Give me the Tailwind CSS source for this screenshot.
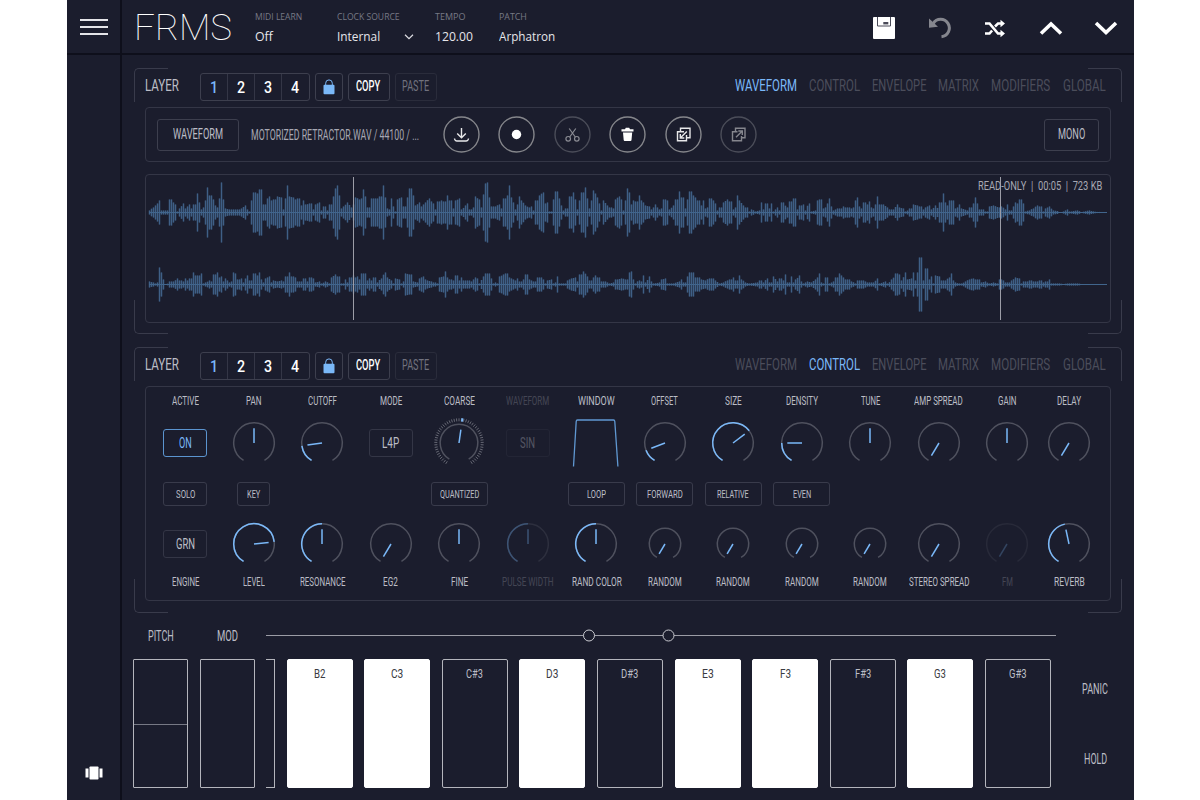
<!DOCTYPE html>
<html lang="en">
<head>
    <meta charset="UTF-8">
    <title>FRMS</title>
    <script src="https://cdn.jsdelivr.net/npm/@tailwindcss/browser@4"></script>
</head>
<body class="bg-white h-[800px] overflow-hidden pl-[67px]">
    <div class="flex flex-col w-[1067px] h-[800px] bg-[#1b1d2d] text-[#bcbdc6] font-['Roboto',sans-serif] overflow-hidden">

        <!-- top bar -->
        <header class="flex h-[55px] shrink-0 border-b-2 border-[#0e0f1b]">
            <div class="w-[55px] shrink-0 border-r-2 border-[#0e0f1b] flex flex-col items-center gap-[5px] pt-[19px]">
                <div class="w-[28px] h-[2px] bg-[#e4e4e8]"></div>
                <div class="w-[28px] h-[2px] bg-[#e4e4e8]"></div>
                <div class="w-[28px] h-[2px] bg-[#e4e4e8]"></div>
            </div>
            <div class="pl-[12px] pt-[6px] w-[132.5px] text-[37px] leading-[43px] font-thin text-white"><span data-w="98">FRMS</span></div>
            <div class="flex font-['Open_Sans',sans-serif] text-[12px] leading-[16px] text-[#e6e6ea] pt-[10px]">
                <div class="w-[82.5px] flex flex-col gap-[6px]">
                    <div class="text-[9px] leading-[13px] text-[#777985]"><span data-w="47.5">MIDI LEARN</span></div>
                    <div><span data-w="17.5">Off</span></div>
                </div>
                <div class="w-[98px] flex flex-col gap-[6px]">
                    <div class="text-[9px] leading-[13px] text-[#777985]"><span data-w="63">CLOCK SOURCE</span></div>
                    <div class="flex items-center">
                        <div class="w-[67px]"><span data-w="43.5">Internal</span></div>
                        <svg width="10" height="6" viewBox="0 0 10 6" fill="none" stroke="#dddde2" stroke-width="1.2"><path d="M1 .8 5 4.6 9 .8"/></svg>
                    </div>
                </div>
                <div class="w-[64px] flex flex-col gap-[6px]">
                    <div class="text-[9px] leading-[13px] text-[#777985]"><span data-w="30">TEMPO</span></div>
                    <div><span data-w="37.5">120.00</span></div>
                </div>
                <div class="flex flex-col gap-[6px]">
                    <div class="text-[9px] leading-[13px] text-[#777985]"><span data-w="27.5">PATCH</span></div>
                    <div><span data-w="56.5">Arphatron</span></div>
                </div>
            </div>
            <div class="ml-auto mr-[16px] pt-[2px] flex items-center gap-[31.5px]">
                <!-- save -->
                <svg width="24" height="24" viewBox="0 0 24 24"><rect x="1" y="1" width="22" height="22" rx="1" fill="#fff"/><path d="M5.5 1v9h13V1" fill="none" stroke="#4a4b58" stroke-width="1"/><rect x="11.3" y="6" width="5" height="2.4" fill="#4a4b58"/></svg>
                <!-- undo -->
                <svg width="24" height="24" viewBox="0 0 24 24" fill="none"><path d="M5.2 7.5A8.7 8.7 0 1 1 13.5 20.7" stroke="#85868e" stroke-width="3"/><path d="M1 2.5v9.2l9-1z" fill="#85868e"/></svg>
                <!-- shuffle -->
                <svg width="24" height="24" viewBox="0 0 24 24" fill="none" stroke="#fff" stroke-width="2.6"><path d="M2 7.5h4.5l8.5 10h3.5M2 17.5h4.5l2.6-3M12 10.5l3-3h3.5"/><path d="M17.5 3.8 22 7.5l-4.5 3.7zM17.5 13.8 22 17.5l-4.5 3.7z" fill="#fff" stroke="none"/></svg>
                <svg width="24" height="24" viewBox="0 0 24 24" fill="none" stroke="#fff" stroke-width="3.6"><path d="M2 17.5 12 8l10 9.5"/></svg>
                <svg width="24" height="24" viewBox="0 0 24 24" fill="none" stroke="#fff" stroke-width="3.6"><path d="M2 7 12 16.5 22 7"/></svg>
            </div>
        </header>

        <div class="flex grow">
            <!-- side rail -->
            <nav class="w-[55px] shrink-0 border-r-2 border-[#0e0f1b] flex flex-col justify-end items-center pb-[21px]">
                <svg width="18" height="14" viewBox="0 0 18 14" fill="#fff"><rect x=".5" y="2.5" width="3" height="9"/><rect x="4.5" y=".5" width="9" height="13" rx=".8"/><rect x="14.5" y="2.5" width="3" height="9"/></svg>
            </nav>

            <main class="pl-[12px] pt-[13px] flex flex-col">
                <!-- waveform layer -->
                <section class="relative w-[988px] h-[266px] mb-[13px] px-[11px]">
                    <div class="absolute left-0 top-0 w-[34px] h-[34px] border-t border-l border-[#393b4b] rounded-tl-[5px]"></div>
                    <div class="absolute right-0 top-0 w-[34px] h-[34px] border-t border-r border-[#393b4b] rounded-tr-[5px]"></div>
                    <div class="absolute left-0 bottom-0 w-[34px] h-[34px] border-b border-l border-[#393b4b] rounded-bl-[5px]"></div>
                    <div class="absolute right-0 bottom-0 w-[34px] h-[34px] border-b border-r border-[#393b4b] rounded-br-[5px]"></div>
                    <div data-header="WAVEFORM" class="flex h-[39px] pt-[5px]"></div>
                    <div class="flex items-center h-[55px] w-[966px] border border-[#343646] rounded-[4px] px-[11px] mb-[12px]">
                        <div class="w-[82px] h-[32px] shrink-0 border border-[#3d3f4e] rounded-[3px] flex items-center justify-center text-[15px] leading-none"><span data-w="50">WAVEFORM</span></div>
                        <div class="pl-[12px] w-[204px] text-[14px] leading-[18px] text-[#a7a8b3]"><span data-w="168">MOTORIZED RETRACTOR.WAV / 44100 / ...</span></div>
                        <div class="flex gap-[18.4px]">
                            <svg width="37" height="37" viewBox="0 0 37 37" fill="none" stroke="#e8e8ea" stroke-width="1.4"><circle cx="18.5" cy="18.5" r="17.5" stroke="#85868b"/><path d="M18.5 12v9.5M14.2 17.5l4.3 4.3 4.3-4.3M11.5 22.5q.3 2.5 2.5 2.5h9q2.2 0 2.5-2.5"/></svg>
                            <svg width="37" height="37" viewBox="0 0 37 37" fill="none"><circle cx="18.5" cy="18.5" r="17.5" stroke="#85868b" stroke-width="1.4"/><circle cx="18.5" cy="18.5" r="4.7" fill="#fff"/></svg>
                            <svg width="37" height="37" viewBox="0 0 37 37" fill="none" stroke="#8a8b93" stroke-width="1.2"><circle cx="18.5" cy="18.5" r="17.5" stroke="#4b4d59" stroke-width="1.4"/><path d="M15.2 12.5 21.3 21M21.8 12.5 15.7 21"/><circle cx="14.2" cy="22.8" r="2.3"/><circle cx="22.8" cy="22.8" r="2.3"/></svg>
                            <svg width="37" height="37" viewBox="0 0 37 37" fill="#fff"><circle cx="18.5" cy="18.5" r="17.5" fill="none" stroke="#85868b" stroke-width="1.4"/><path d="M12.5 13.2h3.5l.8-1.5h3.4l.8 1.5h3.5v2.3h-12zM14 16.5h9.2l-.7 7.5q-.1 1-1 1h-5.8q-.9 0-1-1z"/></svg>
                            <svg width="37" height="37" viewBox="0 0 37 37" fill="none" stroke="#e8e8ea" stroke-width="1.4"><circle cx="18.5" cy="18.5" r="17.5" stroke="#85868b"/><path d="M15.5 15V12.3h9.5v9.5h-3M19 15.7h-6.5v9h9V19"/><path d="M21.8 15.5 15.5 21.8M15.3 18v4h4"/></svg>
                            <svg width="37" height="37" viewBox="0 0 37 37" fill="none" stroke="#85868e" stroke-width="1.4"><circle cx="18.5" cy="18.5" r="17.5" stroke="#4b4d59"/><path d="M15.5 15V12.3h9.5v9.5h-3M17.5 15.7h-5v9h9V20"/><path d="M16 21.3 22 15.3M18.3 15h4v4"/></svg>
                        </div>
                        <div class="ml-auto w-[55px] h-[32px] border border-[#3d3f4e] rounded-[3px] flex items-center justify-center text-[15px] leading-none"><span data-w="27">MONO</span></div>
                    </div>
                    <div class="relative h-[149px] w-[966px] border border-[#343646] rounded-[4px]">
                        <svg id="wave" width="964" height="147" viewBox="146 175 964 147"></svg>
                        <div class="absolute right-[8px] top-[3px] text-[13px] leading-[16px] text-[#a7a8b3] whitespace-pre"><span data-w="124">READ-ONLY  |  00:05  |  723 KB</span></div>
                    </div>
                </section>

                <!-- control layer -->
                <section class="relative w-[988px] h-[266px] px-[11px]">
                    <div class="absolute left-0 top-0 w-[34px] h-[34px] border-t border-l border-[#393b4b] rounded-tl-[5px]"></div>
                    <div class="absolute right-0 top-0 w-[34px] h-[34px] border-t border-r border-[#393b4b] rounded-tr-[5px]"></div>
                    <div class="absolute left-0 bottom-0 w-[34px] h-[34px] border-b border-l border-[#393b4b] rounded-bl-[5px]"></div>
                    <div class="absolute right-0 bottom-0 w-[34px] h-[34px] border-b border-r border-[#393b4b] rounded-br-[5px]"></div>
                    <div data-header="CONTROL" class="flex h-[39px] pt-[5px]"></div>
                    <div id="controls" class="flex h-[215px] w-[966px] border border-[#343646] rounded-[4px] pl-[5px] pt-px"></div>
                </section>

                <!-- keyboard -->
                <section class="flex h-[188px] pt-[12px] -ml-px">
                    <div class="w-[55px] mr-[12px]">
                        <div class="h-[34px] pt-[2px] flex justify-center text-[14px] leading-[18px]"><span data-w="26">PITCH</span></div>
                        <div class="h-[129px] border border-[#b4b5bc] pt-[64px] rounded-[1px]"><div class="h-px bg-[#777985]"></div></div>
                    </div>
                    <div class="w-[55px] mr-[11px]">
                        <div class="h-[34px] pt-[2px] flex justify-center text-[14px] leading-[18px]"><span data-w="21">MOD</span></div>
                        <div class="h-[129px] border border-[#b4b5bc] rounded-[1px]"></div>
                    </div>
                    <div class="w-[790px]">
                        <svg class="block" width="790" height="34" viewBox="266 625 790 34" fill="#1b1d2d" stroke="#9b9ca5"><path d="M266 635.5H1056"/><circle cx="589" cy="635.5" r="5.5" stroke="#c9cad0"/><circle cx="668.5" cy="635.5" r="5.5" stroke="#c9cad0"/></svg>
                        <div id="keys" class="flex gap-[11.6px]">
                            <div class="w-[9px] h-[129px] border-y border-r border-[#b4b5bc]"></div>
                        </div>
                    </div>
                    <div class="w-[78px] pt-[54px] text-[14px] leading-[20px] flex flex-col items-center gap-[50px]">
                        <div><span data-w="26">PANIC</span></div>
                        <div><span data-w="23">HOLD</span></div>
                    </div>
                </section>
            </main>
        </div>
    </div>

    <script>
        const BLUE = '#7ab8f8';

        // layer headers
        const tabs = [['WAVEFORM', 62], ['CONTROL', 51], ['ENVELOPE', 54.5], ['MATRIX', 41], ['MODIFIERS', 59.5], ['GLOBAL', 43]];
        document.querySelectorAll('[data-header]').forEach(el => {
            el.innerHTML = `
                <div class="w-[54.5px] pt-[2px] text-[17px] leading-[20px]"><span data-w="34">LAYER</span></div>
                <div class="flex h-[28px] w-[110px] border border-[#3d3f4e] rounded-[3px] text-[16px] leading-none font-medium text-white divide-x divide-[#343646]">
                    ${[1, 2, 3, 4].map(n => `<div class="flex-1 flex items-center justify-center pt-px"><span data-w="8" ${n == 1 ? `style="color:${BLUE}"` : ''}>${n}</span></div>`).join('')}
                </div>
                <div class="ml-[5px] w-[28px] h-[28px] border border-[#3d3f4e] rounded-[3px] flex items-center justify-center">
                    <svg width="12" height="16" viewBox="0 0 12 16"><path d="M2.7 7V4.2a3.3 3.3 0 0 1 6.6 0V7" fill="none" stroke="${BLUE}" stroke-width="1"/><rect x=".5" y="5.8" width="11" height="9.5" rx="1" fill="${BLUE}"/></svg>
                </div>
                <div class="ml-[5px] w-[42px] h-[28px] border border-[#3d3f4e] rounded-[3px] flex items-center justify-center pt-px text-[14.5px] leading-none font-medium text-white"><span data-w="24.5">COPY</span></div>
                <div class="ml-[5px] w-[42px] h-[28px] border border-[#2a2c3b] rounded-[3px] flex items-center justify-center pt-px text-[14.5px] leading-none text-[#71727e]"><span data-w="27">PASTE</span></div>
                <div class="ml-auto mr-[5.5px] pt-[2px] flex gap-[12px] text-[17px] leading-[20px] text-[#4b4d5b]">
                    ${tabs.map(([t, w]) => `<div class="${t == el.dataset.header ? 'text-[#7ab8f8]' : ''}"><span data-w="${w}">${t}</span></div>`).join('')}
                </div>`;
        });

        // controls: angles in degrees from 12 o'clock, sweep is -149..149
        function pt(r, a) {
            const t = a * Math.PI / 180;
            return (30 + r * Math.sin(t)).toFixed(2) + ' ' + (30 - r * Math.cos(t)).toFixed(2);
        }
        function arc(r, a, b) {
            return `M${pt(r, a)}A${r} ${r} 0 ${b - a > 180 ? 1 : 0} 1 ${pt(r, b)}`;
        }
        function knob(k) {
            const r = k.small ? 15.7 : k.ticks ? 18.8 : 20.3;
            const len = k.small ? 11.5 : k.ticks ? 13.5 : 14.7;
            let s = `<path d="${arc(r, -149, 149)}" stroke="#4f515e"/>`;
            if (k.fill) s += `<path d="${arc(r, -149, k.a)}" stroke="${BLUE}"/>`;
            s += `<path d="M30 30L${pt(len, k.a)}" stroke="${BLUE}"/>`;
            if (k.ticks) {
                for (let i = -25; i <= 25; i++) s += `<path d="M${pt(21.7, i * 5.9)}L${pt(24.7, i * 5.9)}" stroke="#666874" stroke-width="1"/>`;
                s += `<path d="M${pt(21.5, 8)}L${pt(25, 8)}" stroke="${BLUE}" stroke-width="2"/>`;
            }
            return `<svg class="shrink-0" width="60" height="60" viewBox="0 0 60 60" fill="none" stroke-width="1.5">${s}</svg>`;
        }
        function big([t, w, on]) {
            return `<div class="w-[44px] h-[28px] border rounded-[3px] flex items-center justify-center text-[14px] ${on ? 'border-[#5b94cf] text-[#7ab8f8]' : 'border-[#343646]'}"><span data-w="${w}">${t}</span></div>`;
        }
        const windowShape = `<svg class="shrink-0" width="60" height="60" viewBox="0 0 60 60" fill="none" stroke="#6098d2" stroke-width="1.3"><path d="M7.5 53.5 10.2 8.5Q10.3 7 11.5 7h36Q48.7 7 48.8 8.5L51.9 53.5"/></svg>`;
        const off = 'opacity-25', half = 'opacity-35';
        const cols = [
            { top: ['ACTIVE', 27], one: big(['ON', 13, 1]), btn: ['SOLO', 19, 44], two: big(['GRN', 19]), bot: ['ENGINE', 27.5] },
            { top: ['PAN', 15.5], one: knob({ a: 0 }), btn: ['KEY', 13.5, 33], two: knob({ a: 84, fill: 1 }), bot: ['LEVEL', 22] },
            { top: ['CUTOFF', 29], one: knob({ a: -98, fill: 1 }), two: knob({ a: 0, fill: 1 }), bot: ['RESONANCE', 45.5] },
            { top: ['MODE', 22.5], one: big(['L4P', 17]), two: knob({ a: -149 }), bot: ['EG2', 15] },
            { top: ['COARSE', 31], one: knob({ a: 8, ticks: 1 }), btn: ['QUANTIZED', 39.5, 57], two: knob({ a: 0 }), bot: ['FINE', 17] },
            { top: ['WAVEFORM', 43.5], one: big(['SIN', 15]), two: knob({ a: 0, fill: 1 }), bot: ['PULSE WIDTH', 51.5], dimTop: off, dim: half },
            { top: ['WINDOW', 36.5], one: windowShape, btn: ['LOOP', 19, 57], two: knob({ a: 0, fill: 1 }), bot: ['RAND COLOR', 49.5] },
            { top: ['OFFSET', 27], one: knob({ a: -111, fill: 1 }), btn: ['FORWARD', 35.5, 57], two: knob({ a: -149, small: 1 }), bot: ['RANDOM', 34] },
            { top: ['SIZE', 16.5], one: knob({ a: 53, fill: 1 }), btn: ['RELATIVE', 32, 57], two: knob({ a: -149, small: 1 }), bot: ['RANDOM', 34] },
            { top: ['DENSITY', 32], one: knob({ a: -90, fill: 1 }), btn: ['EVEN', 18.5, 57], two: knob({ a: -149, small: 1 }), bot: ['RANDOM', 34] },
            { top: ['TUNE', 19.5], one: knob({ a: 0 }), two: knob({ a: -149, small: 1 }), bot: ['RANDOM', 34] },
            { top: ['AMP SPREAD', 49], one: knob({ a: -149 }), two: knob({ a: -149 }), bot: ['STEREO SPREAD', 60.5] },
            { top: ['GAIN', 18.5], one: knob({ a: 0 }), two: knob({ a: -149 }), bot: ['FM', 11], dim: off },
            { top: ['DELAY', 24], one: knob({ a: -149 }), two: knob({ a: -12, fill: 1 }), bot: ['REVERB', 30.5], last: 1 },
        ];
        document.getElementById('controls').innerHTML = cols.map(c => `
            <div class="${c.last ? 'w-[57px] -ml-px' : 'w-[68.5px]'} shrink-0 grid grid-cols-1 grid-rows-[26px_58px_44px_56px_20px] content-start justify-items-center items-center text-[12.5px] leading-[14px]">
                <div class="${c.dimTop || ''}"><span data-w="${c.top[1]}">${c.top[0]}</span></div>
                <div class="h-[58px] flex items-center ${c.dimTop ? 'opacity-35' : ''}">${c.one}</div>
                <div>${c.btn ? `<div class="h-[24px] border border-[#393b4b] rounded-[3px] flex items-center justify-center text-[11.5px]" style="width:${c.btn[2]}px"><span data-w="${c.btn[1]}">${c.btn[0]}</span></div>` : ''}</div>
                <div class="h-[56px] flex items-center ${c.dim || ''}">${c.two}</div>
                <div class="${c.dim ? 'opacity-25' : ''}"><span data-w="${c.bot[1]}">${c.bot[0]}</span></div>
            </div>`).join('');

        // keys
        document.getElementById('keys').innerHTML += [['B2', 11.5], ['C3', 12], ['C#3', 17], ['D3', 12], ['D#3', 17.5], ['E3', 11.5], ['F3', 11], ['F#3', 16], ['G3', 12], ['G#3', 17.5]].map(([n, w]) => `
            <div class="w-[66px] h-[129px] shrink-0 rounded-[2px] border flex justify-center pt-[4px] text-[13.5px] leading-[18px] ${n.includes('#') ? 'border-[#b4b5bc] text-[#bcbdc6]' : 'bg-white border-white text-[#3a3b42]'}"><span data-w="${w}">${n}</span></div>`).join('');

        // waveform peaks: [segment start, "x:amp ..."], three units of x to a pixel
        const left = [
            [0, '45:2 55:5 65:7 75:12 82:2 98:2 108:13 115:10 122:8 126:1 136:4 147:9 155:4 163:8 172:4 180:8 187:19 193:10 198:3 205:5 212:12 220:25 228:17 236:13 245:7 250:5 256:14 262:30 266:13 270:4 285:3 300:3 312:3 322:4 332:7 338:3 345:1 350:12 360:20 370:19 378:23 383:13 390:8 397:14 405:16 412:12 416:2 420:13 430:16 440:15 446:3 452:14 459:27 465:16 475:15 485:13 492:14 498:7 508:12 515:8 528:9 535:3 543:8 555:10 562:2 570:6 580:2 588:8 597:16 605:24 610:27 617:17 622:4 628:6 640:10 650:5 658:8 665:15 675:13 682:14 688:23 694:16 700:5 706:5 712:14 727:14 732:3 738:16 745:27 751:15 757:4 763:3 770:14 777:6 782:1 787:13 800:15 810:6 818:15 828:24 836:17 845:7 855:10 862:6 872:10 885:14 895:9 903:3 912:11 922:12 930:11 938:17 948:12 956:4 965:12 975:14'],
            [978, '5:3 20:9 30:3 38:5 45:16 55:13 62:5 68:18 75:29 82:30 88:15 95:6 105:6 115:8 125:4 132:14 140:17 147:27 152:15 158:10 165:3 170:8 176:16 184:12 195:7 205:5 215:6 222:2 228:12 237:17 247:20 252:9 260:10 266:1 278:1 282:13 288:21 294:14 300:7 305:1 318:4 325:4 330:16 338:20 344:13 350:3 357:12 366:20 376:25 382:14 388:4 395:12 401:22 410:15 418:9 424:2 430:12 440:7 450:5 458:4 465:13 475:16 483:13 490:2 497:12 503:24 509:20 514:8 520:12 528:11 537:17 545:12 555:7 565:6 575:3 585:8 595:3 605:4 612:13 620:12 628:3 640:7 648:13 658:21 666:15 674:4 684:13 690:21 698:17 706:15 714:12 720:7 727:12 733:4 740:5 745:14 755:14 765:9 772:2 780:5 790:10 800:13 810:11 818:3 825:5 830:17 838:12 848:7 858:5 868:1 875:3 885:1 895:2 901:10 910:3 918:9 925:4 934:9 940:1 950:5 955:2 966:10'],
            [1953, '5:5 15:11 27:14 32:8 38:3 45:7 52:8 58:2 70:9 78:1 88:2 95:12 105:13 112:4 118:5 125:9 133:14 140:6 146:2 155:4 165:4 173:6 182:5 190:5 200:4 208:6 213:12 218:15 223:6 230:4 237:10 243:8 250:11 256:5 263:4 268:8 274:16 279:8 285:8 295:8 305:5 315:3 325:3 335:8 342:5 352:4 362:1 375:4 385:8 395:7 405:6 412:3 420:5 432:7 440:3 450:7 460:3 465:10 474:19 480:10 485:7 492:12 502:12 507:4 515:5 522:8 530:4 545:2 555:5 565:9 572:15 577:9 584:3 595:3 603:1 612:6 625:7 640:5 650:6 660:3 667:8 674:2 680:2 688:10 697:9 705:13 714:9 718:1 730:2 742:4 755:7 765:6 772:1 780:4 793:6 802:2 815:1.5 825:.5 835:1 845:3 855:1 875:2 890:.5 910:2 930:.7 965:.4']
        ];
        const right = [
            [0, '45:3 55:2 62:1 72:2 75:17 81:12 88:5 92:.5 104:1 108:3 118:3 130:6 138:4 147:3 154:6 160:4 166:6 172:6 178:12 185:9 194:9 202:11 206:1 215:2 225:4 232:3 240:10 248:12 254:7 262:8 268:3 275:6 283:2 292:3 297:12 305:11 312:5 320:6 328:2 337:9 345:4 352:4 360:11 370:9 376:12 380:5 388:2 395:6 403:8 407:1 418:4 430:3 440:4 447:3 452:8 460:8 466:12 474:8 482:7 490:3 500:3 510:6 520:3 528:7 535:6 545:2 555:3 562:1 575:3 585:1 592:7 602:10 612:8 618:1 628:1 633:5 640:2 648:7 655:9 662:7 670:8 677:5 681:11 693:11 698:4 704:6 712:4 720:7 727:2 740:6 751:12 760:7 770:4 777:1 785:6 795:5 802:1 808:3 815:11 825:10 833:10 838:3 850:2 856:6 865:8 872:5 880:4 890:3 900:2 908:1 914:7 925:8 933:13 940:7 948:5 955:4 962:9 970:9 976:4'],
            [978, '3:7 12:4 25:4 35:3 43:7 52:6 58:1 68:8 76:11 84:11 92:6 97:1 105:2 110:1 118:8 130:10 138:11 146:7 155:6 163:4 170:6 180:3 190:5 198:10 206:5 214:4 222:3 230:7 240:7 250:5 257:1 262:4 272:5 278:1 285:2 292:8 297:1 315:1 322:4 332:6 345:7 353:3 360:10 371:13 380:8 390:4 398:7 405:9 414:7 425:3 437:3 445:1 460:2 468:5 485:6 498:5 505:12 511:13 516:5 522:1 535:4 542:3 549:9 556:2 568:8 574:3 580:1 600:2 605:5 615:6 622:1 640:1 655:3 665:5 672:2 680:8 690:12 697:12 705:7 715:7 725:5 735:4 745:6 757:6 767:4 775:1 788:2 800:4 810:5 820:7 828:4 836:9 845:5 855:2 865:1 877:1.5 890:2 900:4 908:2 920:6 930:2 940:8 950:3 960:6 970:4'],
            [1953, '1:10 7:2 15:2 20:8 25:2 32:5 42:9 48:3 55:1 65:3 80:2 88:5 95:7 103:11 108:2 115:1 120:7 127:7 132:1 145:3 153:7 160:11 170:9 178:5 190:5 200:3 210:1 215:4 225:4 235:4 245:2 255:2 265:2 277:6 283:1 300:3 308:1 320:5 333:11 342:10 350:4 360:12 368:5 376:6 385:12 392:4 398:12 402:13 405:27 409:26 413:4 418:6 423:16 430:5 437:8 444:1 452:9 460:8 470:4 480:4 490:7 496:11 501:4 507:2 520:1 530:1 540:3 550:5 562:6 572:5 580:5 590:2 600:3 610:1 625:2 638:1 645:5 652:4 660:2 672:2 680:4 690:7 700:6 705:1 715:3 725:3 735:4 745:3 755:3 765:4 775:2 783:3 793:5 798:1 820:1 835:.5 850:1 878:1 890:.4 965:.3']
        ];
        function wave(data, y) {
            const p = data.flatMap(([o, s]) => s.split(' ').map(v => v.split(':')).map(([x, a]) => [134 + (o + +x) / 3, +a]));
            let bars = '', i = 0;
            for (let x = 149; x < 1106; x += 2) {
                while (i < p.length - 2 && p[i + 1][0] < x) i++;
                // nearest peak inside the bar wins, otherwise interpolate
                const near = p.filter(q => Math.abs(q[0] - x) <= 1);
                const t = Math.min(1, Math.max(0, (x - p[i][0]) / (p[i + 1][0] - p[i][0])));
                const a = near.length ? Math.max(...near.map(q => q[1])) : p[i][1] + t * (p[i + 1][1] - p[i][1]);
                bars += `M${x + .5} ${(y - a).toFixed(1)}V${(y + a).toFixed(1)}`;
            }
            return `<path d="${bars}" stroke="#2b3d57" stroke-width="2"/><path d="${bars}" stroke="#3f5f86" stroke-width="1"/><path d="M149 ${y}H1107" stroke="#41658c" stroke-width="1"/>`;
        }
        document.getElementById('wave').innerHTML = wave(left, 212.5) + wave(right, 284.5) +
            '<path d="M353.5 177V320M1000.5 177V320" stroke="#9c9da7"/>';

        // condense each label to its set width, again whenever its natural width changes
        const fit = new ResizeObserver(entries => entries.forEach(({ target }) => {
            const natural = target.offsetWidth;
            if (natural) target.style.transform = `scaleX(${target.parentNode.dataset.w / natural})`;
        }));
        document.querySelectorAll('[data-w]').forEach(el => {
            el.className = 'block text-left whitespace-pre';
            el.innerHTML = `<span class="inline-block origin-left">${el.textContent}</span>`;
            el.style.width = el.dataset.w + 'px';
            fit.observe(el.firstChild);
        });
    </script>
</body>
</html>
